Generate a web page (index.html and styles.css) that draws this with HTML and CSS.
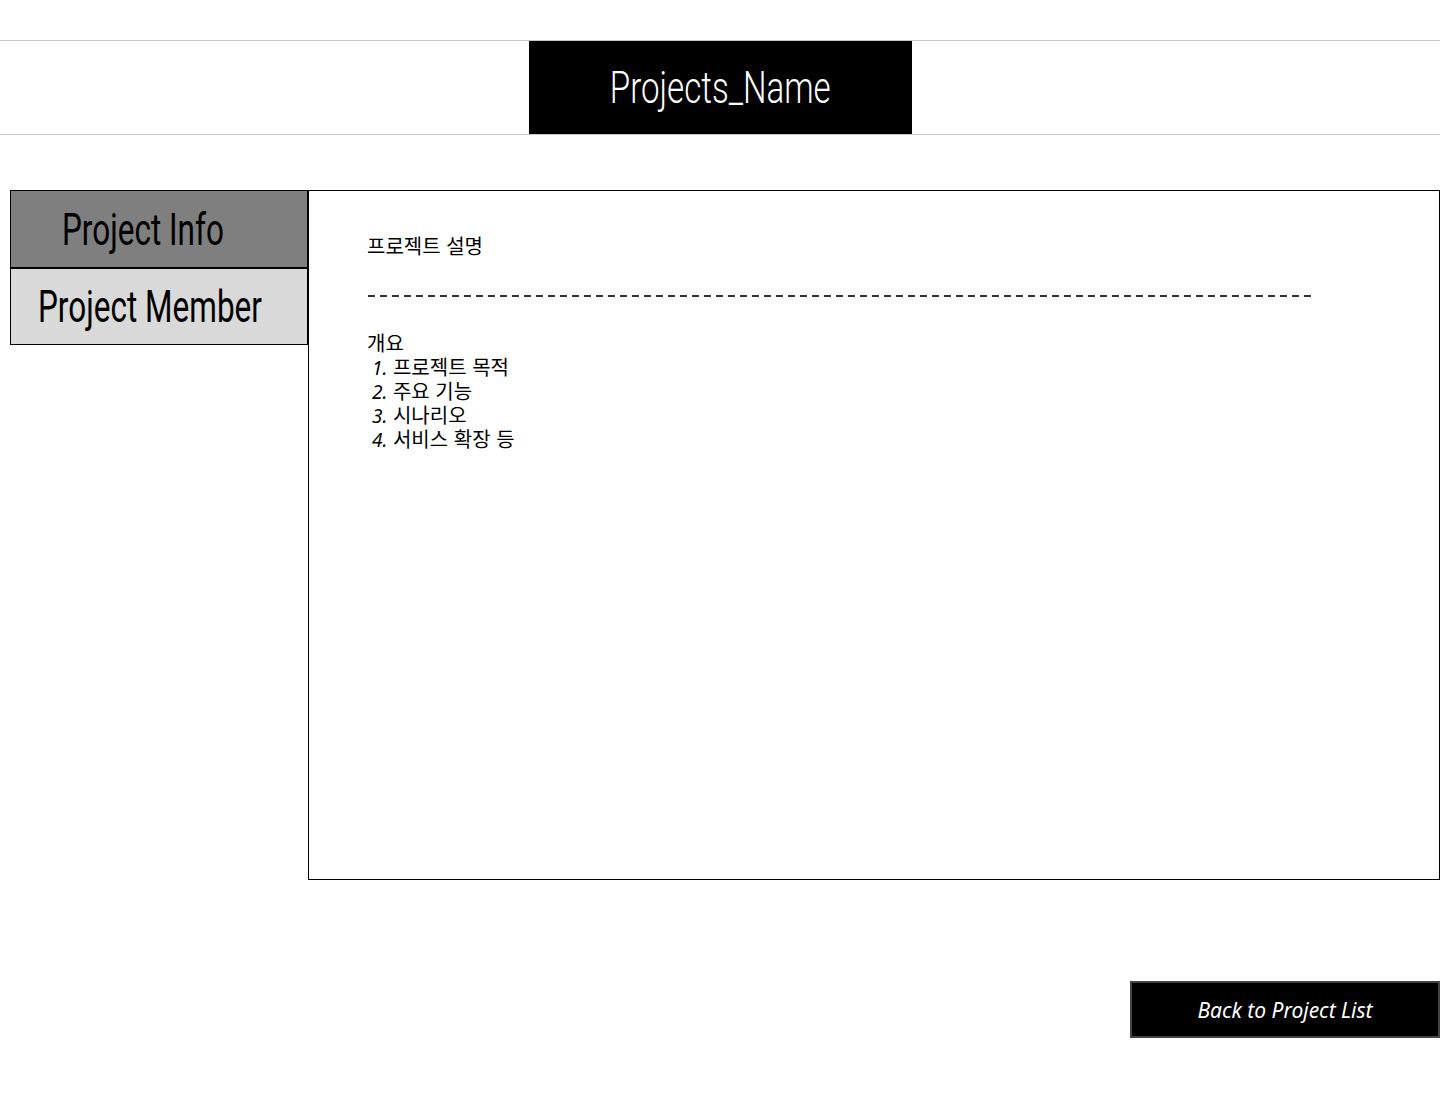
FILE: index.html
```html
<!DOCTYPE html>
<html lang="ko">
<head>
<meta charset="utf-8">
<title>Projects_Name</title>
<link rel="stylesheet" href="styles.css">
</head>
<body>
<header class="topbar">
  <div class="title-box"><h1 class="title"><span class="narrow narrow-center">Projects_Name</span></h1></div>
</header>
<main class="layout">
  <nav class="sidebar">
    <a class="tab tab-active"><span class="narrow">Project Info</span></a>
    <a class="tab tab-member"><span class="narrow">Project Member</span></a>
  </nav>
  <section class="content">
    <p class="desc">프로젝트 설명</p>
    <div class="dashes"></div>
    <div class="overview">
      <p class="ov-title">개요</p>
      <p class="ov-item"><span class="num">1.</span> 프로젝트 목적</p>
      <p class="ov-item"><span class="num">2.</span> 주요 기능</p>
      <p class="ov-item"><span class="num">3.</span> 시나리오</p>
      <p class="ov-item"><span class="num">4.</span> 서비스 확장 등</p>
    </div>
  </section>
</main>
<footer class="footer">
  <a class="back-btn">Back to Project List</a>
</footer>
</body>
</html>
```

FILE: styles.css
```css
* { box-sizing: border-box; }
html, body { margin: 0; padding: 0; background: #fff; }
body {
  font-family: "Noto Sans CJK KR", "Noto Sans", sans-serif;
  color: #000;
  width: 1440px;
  height: 1112px;
  overflow: hidden;
}
.narrow {
  display: inline-block;
  font-family: Roboto, "Liberation Sans", sans-serif;
  font-weight: 300;
  white-space: nowrap;
  transform: scaleX(0.7);
  transform-origin: left center;
}
.narrow-center {
  transform: scaleX(0.735);
  transform-origin: center center;
}
.topbar {
  margin-top: 40px;
  height: 95px;
  border-top: 1px solid #c8c8c8;
  border-bottom: 1px solid #c8c8c8;
  display: flex;
  justify-content: center;
}
.title-box {
  width: 383px;
  height: 93px;
  background: #000;
  display: flex;
  align-items: center;
  justify-content: center;
}
.title {
  margin: 0 0 4px 0;
  color: #fff;
  font-weight: 400;
  font-size: 45px;
  line-height: 1;
}
.layout {
  display: flex;
  margin-top: 55px;
  padding-left: 10px;
  height: 690px;
}
.sidebar {
  width: 298px;
  display: flex;
  flex-direction: column;
}
.tab {
  display: flex;
  align-items: center;
  height: 78px;
  border: 1px solid #000;
  font-size: 45px;
  line-height: 1;
  color: #000;
  overflow: hidden;
}
.tab .narrow { font-weight: 400; }
.tab-active {
  background: #7f7f7f;
  padding-left: 51px;
}
.tab-member {
  background: #d9d9d9;
  border-top-width: 2px;
  margin-top: -1px;
  padding-left: 27px;
}
.content {
  flex: 1;
  border: 1px solid #000;
  padding: 41px 0 0 58px;
}
.desc {
  margin: 0;
  font-size: 20px;
  line-height: 28px;
}
.dashes {
  margin-top: 35px;
  margin-left: 1px;
  width: 944px;
  height: 2px;
  background: repeating-linear-gradient(to right, #333 0 7px, transparent 7px 12px);
}
.overview {
  margin-top: 34px;
}
.ov-title, .ov-item {
  margin: 0;
  font-size: 20px;
  line-height: 24px;
  height: 24px;
}
.ov-item { padding-left: 5px; }
.num {
  font-style: italic;
  font-family: "Noto Sans", sans-serif;
  font-size: 19px;
  line-height: 1;
}
.footer {
  display: flex;
  justify-content: flex-end;
  margin-top: 101px;
}
.back-btn {
  width: 310px;
  height: 57px;
  background: #000;
  border: 2px solid #444;
  color: #fff;
  font-family: "Noto Sans", sans-serif;
  font-style: italic;
  font-size: 21px;
  display: flex;
  align-items: center;
  justify-content: center;
}
```
